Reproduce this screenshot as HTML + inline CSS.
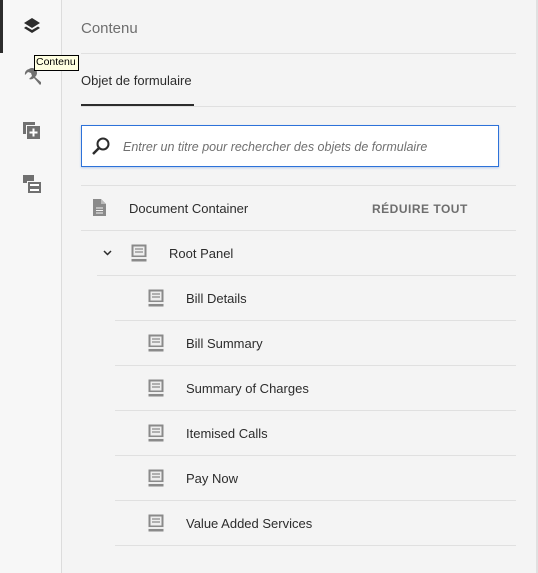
<!DOCTYPE html>
<html><head><style>
*{margin:0;padding:0;box-sizing:border-box}
body{width:538px;height:573px;background:#f4f4f4;font-family:"Liberation Sans",sans-serif;position:relative;overflow:hidden;color:#2c2c2c}
.side{position:absolute;left:0;top:0;width:62px;height:573px;background:#f7f7f7;border-right:1px solid #dcdcdc}
.abs{position:absolute}
.hl{position:absolute;height:1px;background:#e0e0e0}
.t{position:absolute;font-size:13px;color:#2c2c2c;line-height:16px}
</style></head><body>
<div class="side"></div>
<div class="abs" style="left:0;top:0;width:3px;height:53px;background:#2c2c2c"></div>
<svg class="abs" style="left:23px;top:17px" width="18" height="18" viewBox="0 0 18 18"><path d="M9 1L17 6L9 11L1 6Z" fill="#2c2c2c"/><path d="M3 9.5L1 11L9 16L17 11L15 9.5L9 13Z" fill="#2c2c2c"/></svg>
<svg class="abs" style="left:23px;top:68px" width="18" height="18" viewBox="0 0 18 18"><path d="M6 1a5 5 0 0 0-4 6l3-3 3 1 1 3-3 3a5 5 0 0 0 5-1l6 7 2-2-7-6a5 5 0 0 0-6-8z" fill="#707070"/></svg>
<svg class="abs" style="left:23px;top:122px" width="18" height="18" viewBox="0 0 18 18"><rect x="0" y="0" width="12" height="12" fill="#707070"/><rect x="3" y="3" width="14" height="14" fill="#f7f7f7"/><rect x="4" y="4" width="13" height="13" fill="#707070"/><path d="M10.5 6.5v8M6.5 10.5h8" stroke="#fff" stroke-width="2"/></svg>
<svg class="abs" style="left:23px;top:175px" width="18" height="18" viewBox="0 0 18 18"><rect x="0" y="0" width="11" height="8" fill="#707070"/><rect x="4" y="6" width="14" height="12" fill="#f7f7f7"/><rect x="5" y="7" width="13" height="11" fill="#707070"/><rect x="7" y="9" width="9" height="2" fill="#fff"/><rect x="7" y="14" width="9" height="2" fill="#fff"/></svg>
<div class="abs" style="left:34px;top:55px;height:16px;width:45px;padding:0 1px;background:#ffffe1;border:1px solid #000;font-size:10.5px;line-height:13px;color:#000">Contenu</div>

<div class="t" style="left:81px;top:20px;font-size:15px;color:#6e6e6e;line-height:18px">Contenu</div>
<div class="hl" style="left:81px;top:53px;width:435px"></div>
<div class="t" style="left:81px;top:73px">Objet de formulaire</div>
<div class="hl" style="left:81px;top:106px;width:435px"></div>
<div class="abs" style="left:81px;top:104px;width:113px;height:2px;background:#2c2c2c"></div>
<div class="abs" style="left:81px;top:125px;width:418px;height:42px;background:#fff;border:1px solid #2d72d9;box-shadow:0 1px 2px rgba(45,114,217,.3)"></div>
<svg class="abs" style="left:91px;top:136px" width="20" height="20" viewBox="0 0 20 20"><circle cx="12" cy="8" r="5.5" fill="none" stroke="#2c2c2c" stroke-width="2"/><path d="M8 12L2 18" stroke="#2c2c2c" stroke-width="2.5"/></svg>
<div class="t" style="left:123px;top:139px;font-style:italic;color:#707070;font-size:12.5px">Entrer un titre pour rechercher des objets de formulaire</div>
<div class="hl" style="left:81px;top:185px;width:435px"></div>
<svg class="abs" style="left:93px;top:199px" width="13" height="17" viewBox="0 0 13 17"><path d="M0 0h8l5 5v12H0z" fill="#8a8a8a"/><path d="M8 0v5h5" fill="#bbb"/><path d="M3 9h7M3 11.5h7M3 14h7" stroke="#f4f4f4" stroke-width="1"/></svg>
<div class="t" style="left:129px;top:201px">Document Container</div>
<div class="t" style="left:372px;top:201px;font-size:12px;font-weight:bold;color:#6e6e6e;letter-spacing:0.5px">RÉDUIRE TOUT</div>
<div class="hl" style="left:81px;top:230px;width:435px"></div>
<svg class="abs" style="left:103px;top:250px" width="9" height="6" viewBox="0 0 9 6"><path d="M1 1l3.5 3.5L8 1" fill="none" stroke="#2c2c2c" stroke-width="1.5"/></svg>

<div id="rows"></div>
<script>
var rows=[[131,169,246,"Root Panel",97]];
var n=["Bill Details","Bill Summary","Summary of Charges","Itemised Calls","Pay Now","Value Added Services"];
n.forEach(function(s,i){rows.push([148,186,291+45*i,s,115])});
var h="";
rows.forEach(function(r){
h+='<svg class="abs" style="left:'+r[0]+'px;top:'+(r[2]-2)+'px" width="16" height="18" viewBox="0 0 16 18"><rect x="0.5" y="0.5" width="15" height="17" fill="#8a8a8a"/><rect x="2.5" y="2.5" width="11" height="9" fill="#eee"/><path d="M4 5h8M4 8h8" stroke="#8a8a8a" stroke-width="1.2"/><rect x="0" y="13" width="16" height="2" fill="#eee"/></svg>';
h+='<div class="t" style="left:'+r[1]+'px;top:'+r[2]+'px">'+r[3]+'</div>';
h+='<div class="hl" style="left:'+r[4]+'px;top:'+(r[2]+29)+'px;width:'+(516-r[4])+'px"></div>';
});
document.getElementById("rows").innerHTML=h;
</script>
<div class="abs" style="left:536px;top:0;width:2px;height:573px;background:#e0e0e0"></div>
</body></html>
